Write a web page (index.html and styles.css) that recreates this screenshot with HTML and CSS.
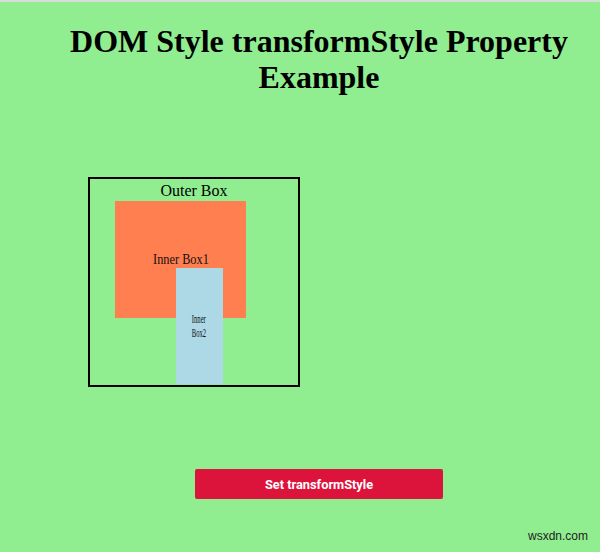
FILE: index.html
```
<!DOCTYPE html>
<html>
<head>
<meta charset="utf-8">
<link rel="stylesheet" href="styles.css">
</head>
<body>
<div class="topline"></div>
<h1 class="title">DOM Style transformStyle Property Example</h1>
<div class="outer">
  <div class="outer-label">Outer Box</div>
  <div class="box1"><span class="box1-label">Inner Box1</span></div>
  <div class="box2"><span class="box2-label">Inner<br>Box2</span></div>
</div>
<div class="actions">
  <button class="btn">Set transformStyle</button>
</div>
<div class="watermark">wsxdn.com</div>
</body>
</html>
```
FILE: styles.css
```
html, body {
  margin: 0;
  padding: 0;
}
body {
  background: #90ee90;
  width: 600px;
  height: 552px;
  position: relative;
  overflow: hidden;
  font-family: "Liberation Serif", serif;
}
.topline {
  height: 2px;
  background: #d8dcd8;
}
.title {
  margin: 21px 0 0 0;
  padding-left: 38px;
  padding-right: 0;
  text-align: center;
  font-size: 32px;
  line-height: 36px;
  font-weight: bold;
  color: #000;
}
.outer {
  position: relative;
  margin: 82px 0 0 88px;
  width: 208px;
  height: 206px;
  border: 2px solid #000;
}
.outer-label {
  text-align: center;
  font-size: 16px;
  line-height: 18px;
  margin-top: 3px;
  color: #000;
}
.box1 {
  position: absolute;
  left: 25px;
  top: 22px;
  width: 131px;
  height: 117px;
  background: #ff7f50;
  display: flex;
  justify-content: center;
  align-items: center;
}
.box1-label {
  font-size: 15px;
  display: inline-block;
  transform: scaleX(0.82);
  color: #111;
}
.box2 {
  position: absolute;
  left: 86px;
  top: 89px;
  width: 47px;
  height: 116px;
  background: #add8e6;
  display: flex;
  justify-content: center;
  align-items: center;
}
.box2-label {
  font-size: 12px;
  line-height: 13px;
  display: inline-block;
  transform: scale(0.55, 1.1);
  text-align: left;
  color: #111;
}
.actions {
  margin: 82px 0 0 195px;
}
.btn {
  width: 248px;
  height: 30px;
  border: none;
  border-radius: 2px;
  background: #dc143c;
  color: #fff;
  font-family: Roboto, "Liberation Sans", sans-serif;
  font-weight: bold;
  font-size: 12.8px;
  padding: 0;
}
.watermark {
  position: absolute;
  right: 12px;
  bottom: 9px;
  font-family: "Liberation Sans", sans-serif;
  font-size: 12px;
  color: #222;
}
```
